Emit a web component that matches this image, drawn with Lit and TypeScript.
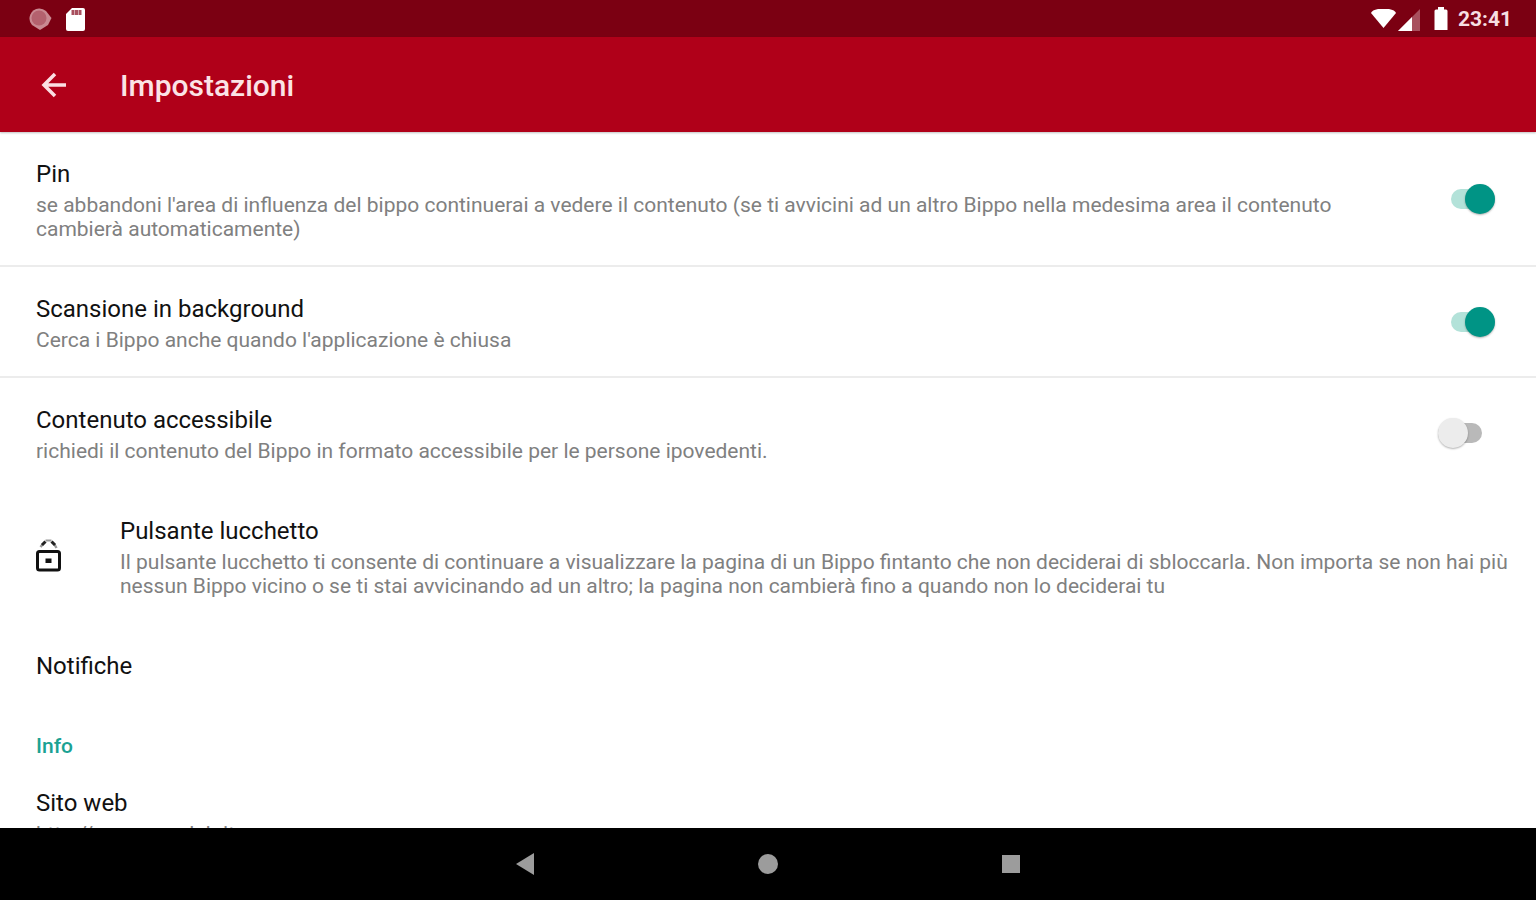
import { LitElement, html, css, svg, nothing } from "lit";
import { customElement, property } from "lit/decorators.js";

@customElement("app-switch")
class AppSwitch extends LitElement {
  @property({ type: Boolean }) checked = false;
  @property() label = "";

  static styles = css`
    :host { display: block; flex: none; width: 58px; }
    .switch {
      appearance: none;
      display: flex;
      align-items: center;
      box-sizing: border-box;
      width: 44px;
      height: 20px;
      margin: 0 0 4px;
      border-radius: 10px;
      background: #b9b9b9;
      cursor: pointer;
    }
    .switch::before {
      content: "";
      width: 30px;
      height: 30px;
      flex: none;
      border-radius: 50%;
      background: #ececec;
      box-shadow: 0 1px 2px rgba(0, 0, 0, 0.3);
    }
    .switch:checked { margin-left: 13px; justify-content: flex-end; background: #b3e2d9; }
    .switch:checked::before { background: #009485; }
  `;

  private toggle(e: Event) {
    this.checked = (e.target as HTMLInputElement).checked;
  }

  render() {
    return html`<input class="switch" type="checkbox" role="switch" aria-label=${this.label}
      .checked=${this.checked} @change=${this.toggle} />`;
  }
}

interface Item {
  title: string;
  summary?: string;
  on?: boolean;
  divider?: boolean;
  lock?: boolean;
}

const SETTINGS: Item[] = [
  { title: "Pin", summary: "se abbandoni l'area di influenza del bippo continuerai a vedere il contenuto (se ti avvicini ad un altro Bippo nella medesima area il contenuto cambierà automaticamente)", on: true, divider: true },
  { title: "Scansione in background", summary: "Cerca i Bippo anche quando l'applicazione è chiusa", on: true, divider: true },
  { title: "Contenuto accessibile", summary: "richiedi il contenuto del Bippo in formato accessibile per le persone ipovedenti.", on: false },
  { title: "Pulsante lucchetto", summary: "Il pulsante lucchetto ti consente di continuare a visualizzare la pagina di un Bippo fintanto che non deciderai di sbloccarla. Non importa se non hai più nessun Bippo vicino o se ti stai avvicinando ad un altro; la pagina non cambierà fino a quando non lo deciderai tu", lock: true },
  { title: "Notifiche" },
];

const lockIcon = svg`<svg width="28" height="40" viewBox="0 0 28 40" fill="none" stroke="#111">
  <rect x="1.500" y="13.500" width="22" height="18.500" rx="2" stroke-width="3"/>
  <path d="M4.500 9L6.500 6.500M18.500 6.500L20.500 10" stroke="#999" stroke-width="2.500"/>
  <path d="M6 7L9.500 3.500M15.500 3.500L19 7" stroke="#222" stroke-width="3"/>
  <path d="M9.500 2.500H15.500" stroke="#999" stroke-width="2"/>
  <rect x="9.500" y="20.500" width="6" height="4.500" fill="#111" stroke="none"/></svg>`;

@customElement("app-root")
class AppRoot extends LitElement {
  static styles = css`
    :host {
      display: flex;
      flex-direction: column;
      height: 100vh;
      overflow: hidden;
      background: #fff;
      color: #111;
      font-family: Roboto, "Liberation Sans", sans-serif;
    }
    svg { display: block; }
    button { border: 0; padding: 0; background: none; cursor: pointer; }
    .status {
      display: flex;
      align-items: center;
      flex: none;
      height: 37px;
      padding: 0 24px 0 28px;
      box-sizing: border-box;
      background: #7b0012;
      color: #f6dfe2;
    }
    .left { display: flex; gap: 12px; flex: 1; }
    .right { display: flex; align-items: center; gap: 7px; }
    .clock { font-size: 21px; line-height: 24px; font-weight: 700; }
    .bar {
      display: flex;
      align-items: center;
      flex: none;
      height: 95px;
      padding: 0 40px;
      gap: 52px;
      background: #b00019;
      box-shadow: 0 1px 2px rgba(0, 0, 0, 0.25);
      z-index: 1;
    }
    h1 { margin: 0; padding-top: 2px; font-size: 30px; line-height: 34px; font-weight: 500; color: #fbe3e6; }
    .list { flex: 1; min-height: 0; overflow: hidden; }
    .row {
      display: flex;
      align-items: center;
      padding: 28px 24px 26px 36px;
    }
    .toggle { padding-right: 40px; gap: 70px; }
    .divider { padding-bottom: 24px; border-bottom: 2px solid #ececec; }
    .plain { padding-bottom: 27px; }
    .icon { flex: none; width: 84px; }
    .text { flex: 1; min-width: 0; }
    .title { margin: 0; font-size: 24px; line-height: 28px; font-weight: 400; }
    .summary { display: block; margin: 5px 0 0; font-size: 21px; line-height: 24px; color: #808080; }
    .section { margin: 0; padding: 25px 36px 1px; font-size: 21px; line-height: 28px; font-weight: 500; color: #1ba294; }
    .link { text-decoration: none; }
    .nav {
      display: flex;
      justify-content: center;
      align-items: center;
      gap: 219px;
      flex: none;
      height: 72px;
      background: #000;
    }
  `;

  private row(i: Item) {
    const sw = i.on !== undefined;
    return html`<section class="row ${sw ? "toggle" : ""} ${i.divider ? "divider" : ""} ${i.summary ? "" : "plain"}">
      ${i.lock ? html`<div class="icon">${lockIcon}</div>` : nothing}
      <div class="text">
        <h2 class="title">${i.title}</h2>
        ${i.summary ? html`<p class="summary">${i.summary}</p>` : nothing}
      </div>
      ${sw ? html`<app-switch .label=${i.title} .checked=${i.on!}></app-switch>` : nothing}
    </section>`;
  }

  render() {
    return html`
      <div class="status">
        <div class="left">
          <svg width="24" height="24" viewBox="0 0 24 24"><path d="M11 1.500A10 10 0 0 1 18 4L23.500 11 20 18 12 23 4 18A10 10 0 0 1 11 1.500Z" fill="#c98992"/><circle cx="11" cy="11" r="7.500" fill="#b4616e"/></svg>
          <svg width="22" height="24" viewBox="0 0 22 24"><path d="M8 1H19Q21 1 21 3V22Q21 24 19 24H4Q2 24 2 22V7Z" fill="#fff"/><path d="M9 3V8M12.500 3V8M16 3V8" stroke="#a8505e" stroke-width="3"/></svg>
        </div>
        <div class="right">
          <svg width="54" height="26" viewBox="0 0 54 26"><path d="M1 7Q2 4 8 3H19Q25 4 26 7L13.500 22Z" fill="#fff"/><path d="M50 3V25H28Z" fill="#a8505e"/><path d="M42 11V25H28Z" fill="#fff"/></svg>
          <svg width="20" height="26" viewBox="0 0 20 26"><path d="M7 1H13V3.500H15Q16.500 3.500 16.500 5V24H3.500V5Q3.500 3.500 5 3.500H7Z" fill="#fff"/></svg>
          <span class="clock">23:41</span>
        </div>
      </div>
      <header class="bar">
        <button aria-label="Indietro"><svg width="28" height="28" viewBox="0 0 28 28" fill="none" stroke="#fbdfe3" stroke-width="3.500"><path d="M26 14H4M15 3L4 14 15 25"/></svg></button>
        <h1>Impostazioni</h1>
      </header>
      <main class="list">
        ${SETTINGS.map((i) => this.row(i))}
        <h3 class="section">Info</h3>
        <section class="row"><div class="text">
          <h2 class="title">Sito web</h2>
          <a class="summary link" href="http://www.senslab.it">http://www.senslab.it</a>
        </div></section>
      </main>
      <nav class="nav">
        <button aria-label="Indietro"><svg width="24" height="24" viewBox="0 0 24 24"><path d="M21 1V23L3 12Z" fill="#9c9c9c"/></svg></button>
        <button aria-label="Home"><svg width="24" height="24" viewBox="0 0 24 24"><circle cx="12" cy="12" r="10" fill="#9c9c9c"/></svg></button>
        <button aria-label="Recenti"><svg width="24" height="24" viewBox="0 0 24 24"><rect x="3" y="3" width="18" height="18" fill="#9c9c9c"/></svg></button>
      </nav>`;
  }
}
